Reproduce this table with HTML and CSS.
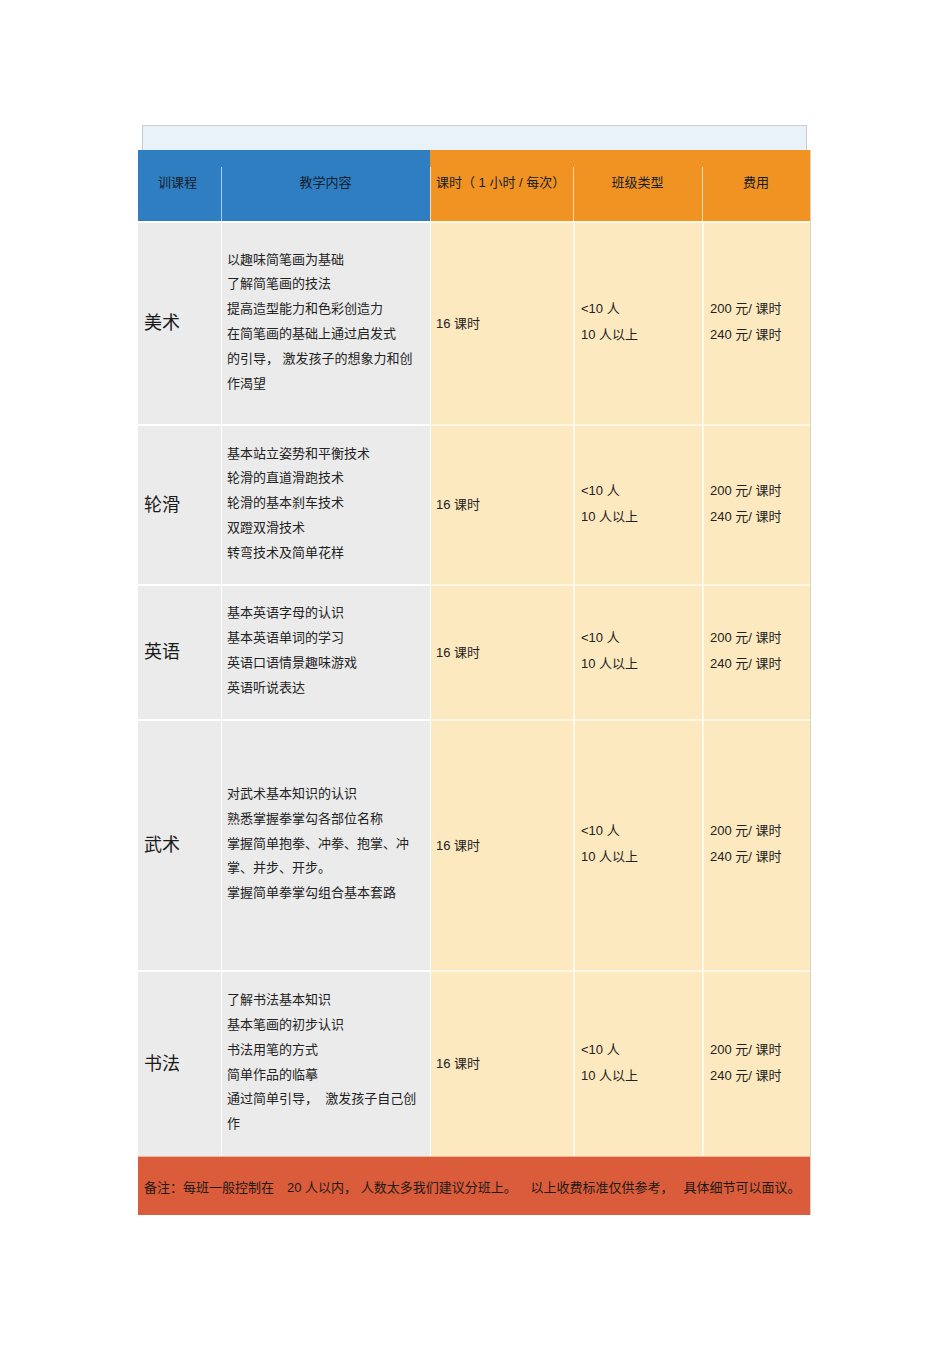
FILE: index.html
```html
<!DOCTYPE html>
<html lang="zh">
<head>
<meta charset="utf-8">
<title>课程表</title>
<link rel="stylesheet" href="styles.css">
</head>
<body>
<div class="page">
  <div class="band"></div>
  <div class="table">
    <div class="row head">
      <div class="hc blue center first">训课程</div>
      <div class="hc blue center">教学内容</div>
      <div class="hc orange">课时（ 1 小时 / 每次）</div>
      <div class="hc orange center">班级类型</div>
      <div class="hc orange center">费用</div>
    </div>

    <div class="row r1">
      <div class="c name grey">美术</div>
      <div class="c content grey">
        <p>以趣味简笔画为基础</p>
        <p>了解简笔画的技法</p>
        <p>提高造型能力和色彩创造力</p>
        <p>在简笔画的基础上通过启发式</p>
        <p>的引导，&nbsp;激发孩子的想象力和创</p>
        <p>作渴望</p>
      </div>
      <div class="c hours cream">16 课时</div>
      <div class="c cls cream"><p>&lt;10 人</p><p>10 人以上</p></div>
      <div class="c fee cream"><p>200 元/ 课时</p><p>240 元/ 课时</p></div>
    </div>

    <div class="row r2">
      <div class="c name grey">轮滑</div>
      <div class="c content grey">
        <p>基本站立姿势和平衡技术</p>
        <p>轮滑的直道滑跑技术</p>
        <p>轮滑的基本刹车技术</p>
        <p>双蹬双滑技术</p>
        <p>转弯技术及简单花样</p>
      </div>
      <div class="c hours cream">16 课时</div>
      <div class="c cls cream"><p>&lt;10 人</p><p>10 人以上</p></div>
      <div class="c fee cream"><p>200 元/ 课时</p><p>240 元/ 课时</p></div>
    </div>

    <div class="row r3">
      <div class="c name grey">英语</div>
      <div class="c content grey">
        <p>基本英语字母的认识</p>
        <p>基本英语单词的学习</p>
        <p>英语口语情景趣味游戏</p>
        <p>英语听说表达</p>
      </div>
      <div class="c hours cream">16 课时</div>
      <div class="c cls cream"><p>&lt;10 人</p><p>10 人以上</p></div>
      <div class="c fee cream"><p>200 元/ 课时</p><p>240 元/ 课时</p></div>
    </div>

    <div class="row r4">
      <div class="c name grey">武术</div>
      <div class="c content grey">
        <p>对武术基本知识的认识</p>
        <p>熟悉掌握拳掌勾各部位名称</p>
        <p>掌握简单抱拳、冲拳、抱掌、冲</p>
        <p>掌、并步、开步。</p>
        <p>掌握简单拳掌勾组合基本套路</p>
      </div>
      <div class="c hours cream">16 课时</div>
      <div class="c cls cream"><p>&lt;10 人</p><p>10 人以上</p></div>
      <div class="c fee cream"><p>200 元/ 课时</p><p>240 元/ 课时</p></div>
    </div>

    <div class="row r5">
      <div class="c name grey">书法</div>
      <div class="c content grey">
        <p>了解书法基本知识</p>
        <p>基本笔画的初步认识</p>
        <p>书法用笔的方式</p>
        <p>简单作品的临摹</p>
        <p>通过简单引导，&nbsp;&nbsp;激发孩子自己创</p>
        <p>作</p>
      </div>
      <div class="c hours cream">16 课时</div>
      <div class="c cls cream"><p>&lt;10 人</p><p>10 人以上</p></div>
      <div class="c fee cream"><p>200 元/ 课时</p><p>240 元/ 课时</p></div>
    </div>

    <div class="foot">备注：每班一般控制在　20 人以内，&nbsp;人数太多我们建议分班上。　&nbsp;&nbsp;以上收费标准仅供参考，　&nbsp;具体细节可以面议。</div>
  </div>
</div>
</body>
</html>
```

FILE: styles.css
```css
html, body {
  margin: 0;
  padding: 0;
  background: #ffffff;
}

body {
  font-family: "Liberation Sans", "Noto Sans CJK SC", sans-serif;
  color: #222222;
  font-size: 13px;
}

.page {
  padding-top: 125px;
  padding-left: 138px;
  width: 672px;
}

.band {
  margin-left: 4px;
  width: 663px;
  height: 24px;
  background: #e8f2f8;
  border: 1px solid #c9cdd0;
  border-bottom: none;
}

.table {
  width: 672px;
  border-right: 1px solid #d8d2c4;
  box-sizing: content-box;
}

.row {
  display: grid;
  grid-template-columns: 83px 209px 143px 129px 108px;
  box-sizing: border-box;
}

.row p {
  margin: 0;
}

/* header */
.head {
  height: 71px;
}

.hc {
  display: flex;
  align-items: center;
  color: #16202c;
  font-size: 13px;
  padding-bottom: 8px;
  box-sizing: border-box;
}

.hc.center {
  justify-content: center;
}

.hc.blue {
  background: linear-gradient(#a9cdee, #a9cdee) 0 17px / 1px 100% no-repeat, #2f7ec2;
}

.hc.orange {
  background: linear-gradient(#fbd8a6, #fbd8a6) 0 17px / 1px 100% no-repeat, #f09322;
  padding-left: 6px;
}

.hc.orange.center {
  padding-left: 0;
}

.hc.first {
  background: #2f7ec2;
  padding-right: 4px;
}

/* body rows */
.r1 { height: 203px; }
.r2 { height: 160px; }
.r3 { height: 135px; }
.r4 { height: 251px; }
.r5 { height: 186px; }

.c {
  display: flex;
  flex-direction: column;
  justify-content: center;
  border-top: 2px solid #ffffff;
  box-sizing: border-box;
}

.c + .c {
  border-left: 1px solid #ffffff;
}

.grey {
  background: #ebebeb;
}

.cream {
  background: #fde9bf;
  padding-bottom: 3px;
}

.cream + .cream {
  border-left: 2px solid #fff8ea;
}

.row .c.cream {
  border-top-color: #fff6e4;
}

.name {
  font-size: 18px;
  padding-left: 6px;
  padding-bottom: 5px;
  color: #1a1a1a;
}

.content {
  padding-left: 5px;
  line-height: 24.8px;
  padding-bottom: 3px;
}

.hours {
  padding-left: 5px;
}

.cls {
  padding-left: 6px;
  line-height: 26px;
}

.fee {
  padding-left: 6px;
  line-height: 26px;
}

/* footer */
.foot {
  height: 59px;
  background: #da5c3b;
  border-top: 1px solid #f2b39c;
  box-sizing: border-box;
  display: flex;
  align-items: center;
  padding-left: 6px;
  font-size: 13px;
  color: #1f1a18;
  white-space: pre;
}
```
